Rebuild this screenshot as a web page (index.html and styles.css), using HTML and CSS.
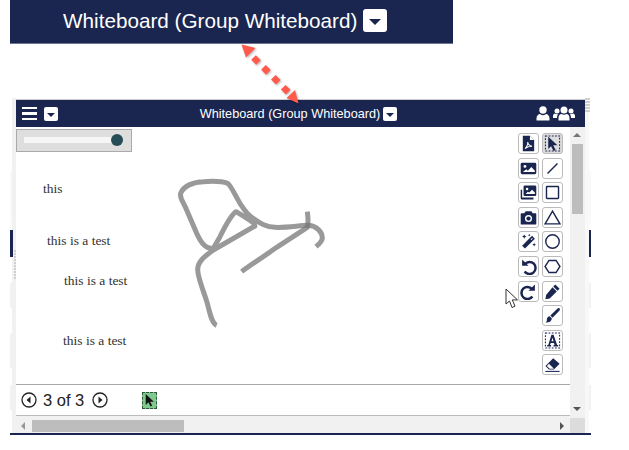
FILE: index.html
```html
<!DOCTYPE html>
<html lang="en">
<head>
  <meta charset="UTF-8">
  <title>Whiteboard</title>
  <link rel="stylesheet" href="styles.css">
</head>
<body>
  <header class="banner">
    <span class="banner-title">Whiteboard (Group Whiteboard)</span>
    <span class="drop drop-big"><i class="caret"></i></span>
  </header>

  <!-- red callout arrow between banner and window -->
  <svg class="callout" width="80" height="70" viewBox="235 40 80 70">
    <path d="M241.500 44.500L255.500 48L246 57.500Z" fill="#ff5a4c"/>
    <path d="M298.500 103.500L286.500 98L295 90Z" fill="#ff5a4c"/>
    <line x1="253.500" y1="57.500" x2="291" y2="95" stroke="#ff5a4c" stroke-width="6.500" stroke-dasharray="7 7"/>
  </svg>

  <div class="stage">
    <i class="strip strip-left"></i>
    <i class="strip strip-right"></i>
    <i class="edge edge-left"></i>
    <i class="edge edge-right"></i>
    <i class="dots dots-left"></i>
    <i class="dots dots-right"></i>
    <div class="frame">
      <div class="topbar">
        <div class="topbar-left">
          <div class="burger"><i></i><i></i><i></i></div>
          <span class="drop"><i class="caret caret-small"></i></span>
        </div>
        <span class="topbar-title">Whiteboard (Group Whiteboard)</span>
        <span class="drop"><i class="caret caret-small"></i></span>
        <div class="topbar-right">
          <svg width="14" height="15" viewBox="0 0 14 15" fill="#fff"><circle cx="7" cy="4" r="3.700"/><path d="M0.500 14.500v-2c0-3 2-4.500 3.500-4.500 1 .8 2 1.200 3 1.200s2-.4 3-1.200c1.500 0 3.500 1.500 3.500 4.500v2z"/></svg>
          <svg width="22" height="15" viewBox="0 0 22 15" fill="#fff"><circle cx="11" cy="4" r="3.500"/><circle cx="4" cy="5" r="2.500"/><circle cx="18" cy="5" r="2.500"/><path d="M5.500 14.500v-2.500c0-2.500 1.500-4 3-4 .8.500 1.600.800 2.500.800s1.700-.3 2.500-.8c1.500 0 3 1.500 3 4v2.500z"/><path d="M0 12v-2c0-1.500 1-2.500 2-2.500.6.400 1.300.6 2 .6l1 .3c-.8.900-1 2.200-1 3.600zM22 12v-2c0-1.500-1-2.500-2-2.500-.6.400-1.300.6-2 .6l-1 .3c.8.900 1 2.200 1 3.600z"/></svg>
        </div>
      </div>

      <div class="work">
        <div class="canvas">
          <div class="slider"><div class="slider-track"></div><div class="slider-thumb"></div></div>

          <p class="note note-a">this</p>
          <p class="note note-b">this is a test</p>
          <p class="note note-c">this is a test</p>
          <p class="note note-d">this is a test</p>

          <svg class="ink" width="180" height="165" viewBox="0 0 540 495" fill="none">
            <path d="M170 466C155 460 150 430 142 400C132 365 113 325 113 298C113 275 135 258 160 240L285 168C285 160 270 150 228 125C212 135 195 170 180 200L160 235C135 238 122 215 110 190L80 120C70 95 58 85 62 70C70 48 100 36 130 35C160 33 190 35 203 40C212 45 225 75 240 100C250 115 258 130 275 142C295 155 315 172 345 172C380 174 420 166 445 166C470 168 487 185 487 205C486 215 478 222 468 230"/>
            <path d="M245 305C270 285 300 268 350 232L442 172C446 155 444 140 442 125"/>
          </svg>

          <div class="tools">
            <div class="tool-col">
              <div class="tool"><svg viewBox="0 0 24 24"><path d="M4 1h10l6 6v16H4z"/><path d="M14 1v6h6" fill="#fff"/><path d="M7 19c3-2 4-6 4-9 0 3 2 5 6 6-3 0-7 1-10 3z" fill="none" stroke="#fff" stroke-width="1.500"/></svg></div>
              <div class="tool"><svg viewBox="0 0 24 24"><rect x="1" y="4" width="22" height="16" rx="2"/><circle cx="7" cy="9" r="2" fill="#fff"/><path d="M4 17l5-4 2 2 5-5 5 5v2z" fill="#fff"/></svg></div>
              <div class="tool"><svg viewBox="0 0 24 24"><path d="M1 8h2v11h16v3H3a2 2 0 0 1-2-2z"/><rect x="5" y="2" width="18" height="15" rx="2"/><circle cx="10" cy="7" r="1.800" fill="#fff"/><path d="M8 14l3-3 2 1 4-4 4 4v2z" fill="#fff"/></svg></div>
              <div class="tool"><svg viewBox="0 0 24 24"><path d="M8 3h8l2 3h4a1 1 0 0 1 1 1v14a1 1 0 0 1-1 1H2a1 1 0 0 1-1-1V7a1 1 0 0 1 1-1h4z"/><circle cx="12" cy="13.500" r="5" fill="#fff"/><circle cx="12" cy="13.500" r="3"/></svg></div>
              <div class="tool"><svg viewBox="0 0 24 24"><path d="M3 18L17 4l4 4L7 22z"/><path d="M15 9l2-2 1 1-2 2z" fill="#fff"/><path d="M6 2l1 2 2 1-2 1-1 2-1-2-2-1 2-1zM20 14l.8 1.700 1.700.8-1.700.8-.8 1.700-.8-1.700-1.700-.8 1.700-.8zM13 1l.6 1.400 1.400.6-1.400.6-.6 1.400-.6-1.400-1.400-.6 1.400-.6z"/></svg></div>
              <div class="tool"><svg viewBox="0 0 24 24"><path d="M7 8.500A8.500 8.500 0 1 1 6.500 19" class="line"/><path d="M3 2v9h9z"/></svg></div>
              <div class="tool"><svg viewBox="0 0 24 24"><path d="M17 8.500A8.500 8.500 0 1 0 17.500 19" class="line"/><path d="M21 2v9h-9z"/></svg></div>
            </div>
            <div class="tool-col">
              <div class="tool tool-on"><svg viewBox="0 0 24 24"><rect x="2" y="1.500" width="20" height="21" fill="none" stroke="#1a2550" stroke-width="1.500" stroke-dasharray="2.500 2"/><path d="M6 2.500l13 12h-6l3.500 6.500-3 1.500-3.500-6.700-4 4z"/></svg></div>
              <div class="tool"><svg viewBox="0 0 24 24"><path d="M5 19L19 5" class="line thin"/></svg></div>
              <div class="tool"><svg viewBox="0 0 24 24"><rect x="3.500" y="3.500" width="17" height="17" rx="1" class="line thin"/></svg></div>
              <div class="tool"><svg viewBox="0 0 24 24"><path d="M12 3L22.500 21h-21z" class="line thin"/></svg></div>
              <div class="tool"><svg viewBox="0 0 24 24"><circle cx="12" cy="12" r="9.500" class="line thin"/></svg></div>
              <div class="tool"><svg viewBox="0 0 24 24"><path d="M7 3.500h10L22.500 12 17 20.500H7L1.500 12z" class="line thin"/></svg></div>
              <div class="tool"><svg viewBox="0 0 24 24"><path d="M16 2l6 6-3 3-6-6zM12 6l6 6-10 10-6 1 1-6z"/></svg></div>
              <div class="tool"><svg viewBox="0 0 24 24"><path d="M22 2c1 1 .5 2-1 4l-9 9-3-3 9-9c2-1.500 3-2 4-1z"/><path d="M8 13l3 3c0 4-3 6-9 6 2-1 2-3 2-4 0-3 2-5 4-5z"/></svg></div>
              <div class="tool"><svg viewBox="0 0 24 24"><rect x="2" y="1.500" width="20" height="21" fill="none" stroke="#1a2550" stroke-width="1.500" stroke-dasharray="2.500 2"/><path d="M10.500 4h3l5 14.500h1.500v2h-6.500v-2h1.500l-1-3h-4.500l-1 3h1.500v2H4.500v-2H6zM12 8l-1.500 5h3z" fill-rule="evenodd"/></svg></div>
              <div class="tool"><svg viewBox="0 0 24 24"><path d="M13 3l9 8-8 8H7l-5-5z"/><path d="M7 11l7 7H8l-4-4z" fill="#fff"/><path d="M2 21h20v1.500H2z"/></svg></div>
            </div>
          </div>
        </div>

        <div class="pager">
          <svg width="16" height="16" viewBox="0 0 16 16"><circle cx="8" cy="8" r="7" fill="none" stroke="#222" stroke-width="1.300"/><path d="M9.500 4.500v7L5.500 8z" fill="#222"/></svg>
          <span class="pager-text">3 of 3</span>
          <svg width="16" height="16" viewBox="0 0 16 16"><circle cx="8" cy="8" r="7" fill="none" stroke="#222" stroke-width="1.300"/><path d="M6.500 4.500v7L10.500 8z" fill="#222"/></svg>
          <div class="current-tool"><svg width="13" height="14" viewBox="0 0 24 24" fill="#111"><path d="M5 1l15 14h-7l4 7-3 2-4-8-5 5z"/></svg></div>
        </div>
      </div>

      <div class="vscroll">
        <i class="tri tri-up"></i>
        <div class="vthumb"></div>
        <i class="tri tri-down"></i>
      </div>

      <div class="hscroll">
        <i class="tri tri-left"></i>
        <div class="hthumb"></div>
        <i class="tri tri-right"></i>
      </div>
      <div class="corner"></div>
    </div>
  </div>

  <svg class="mouse" width="14" height="21" viewBox="0 0 14 21"><path d="M1 1v15l3.500-3 2.500 6.500 3-1.300-2.700-6.300H12.500z" fill="#fff" stroke="#333" stroke-width="1"/></svg>
</body>
</html>
```

FILE: styles.css
```css
body {
  margin: 0;
  background: #fff;
  font-family: "Liberation Sans", Arial, sans-serif;
  position: relative;
  height: 450px;
  overflow: hidden;
}

.banner {
  display: flex;
  align-items: center;
  gap: 6px;
  box-sizing: border-box;
  width: 443px;
  height: 44px;
  margin-left: 10px;
  padding: 0 0 2px 53px;
  background: #1a2550;
  border-bottom: 1px solid #6d7596;
}

.banner-title {
  color: #fff;
  font-size: 20.700px;
  white-space: nowrap;
}

.drop {
  display: flex;
  align-items: center;
  justify-content: center;
  width: 14px;
  height: 14px;
  background: #fff;
  border-radius: 2px;
}

.drop-big {
  width: 24px;
  height: 23px;
  border-radius: 3px;
}

.caret {
  width: 0;
  height: 0;
  margin-top: 3px;
  border: 6px solid transparent;
  border-top: 6px solid #1a2550;
  border-bottom: 0;
}

.caret-small {
  margin-top: 2px;
  border-width: 4px 4px 0;
}

.callout {
  position: absolute;
  left: 235px;
  top: 40px;
  z-index: 5;
  filter: drop-shadow(1px 1px 1px rgba(0, 0, 0, 0.3));
}

.stage {
  position: relative;
  box-sizing: border-box;
  width: 581px;
  height: 337px;
  margin: 54px 0 0 10px;
  padding: 1px 0 0 6px;
  background: #fff;
  border-bottom: 2px solid #1a2550;
}

/* faint patches of the page behind the window */
.stage::before,
.stage::after {
  content: "";
  position: absolute;
  top: 0;
  bottom: 0;
  width: 2px;
  background: linear-gradient(to bottom,
    #fff 72px, #f9f9f9 72px, #f9f9f9 125px, #fff 125px,
    #fff 185px, #f2f2f2 185px, #f2f2f2 210px, #fff 210px,
    #fff 235px, #f2f2f2 235px, #f2f2f2 270px, #fff 270px,
    #fff 287px, #f2f2f2 287px, #f2f2f2 312px, #fff 312px);
}

.stage::before {
  left: 0;
}

.stage::after {
  right: 0;
}

.strip {
  position: absolute;
  top: 0;
  bottom: 0;
}

.strip-left {
  left: 2px;
  width: 4px;
  background: #f1f1f1;
}

.strip-right {
  left: 575px;
  width: 4px;
  background: #f8f8f8;
}

.edge {
  position: absolute;
  top: 132px;
  z-index: 1;
  width: 3px;
  height: 27px;
  background: #1a2550;
}

.edge-left {
  left: 0;
}

.edge-right {
  right: 0;
  width: 2px;
}

.dots {
  position: absolute;
  z-index: 1;
  background: repeating-linear-gradient(to bottom, #cfcfcf 0, #cfcfcf 2px, transparent 2px, transparent 3px);
}

.dots-left {
  left: 4px;
  top: 152px;
  width: 2px;
  height: 30px;
}

.dots-right {
  left: 575px;
  top: 0;
  width: 5px;
  height: 14px;
}

.frame {
  position: relative;
  z-index: 2;
  display: grid;
  grid-template-columns: 554px 15px;
  grid-template-rows: 27px 289px 17px;
  width: 569px;
  background: #fff;
  border-top: 1px solid #ccc;
}

.topbar {
  grid-column: 1 / 3;
  display: flex;
  align-items: center;
  gap: 3px;
  background: #1a2550;
  padding: 0 10px 0 6px;
}

.topbar-left,
.topbar-right {
  flex: 1 1 0;
  display: flex;
  align-items: center;
}

.topbar-left {
  gap: 7px;
}

.topbar-right {
  justify-content: flex-end;
  gap: 3px;
}

.topbar-title {
  color: #fff;
  font-size: 12.700px;
  white-space: nowrap;
}

.burger {
  display: flex;
  flex-direction: column;
  gap: 3px;
  width: 15px;
}

.burger i {
  height: 2.500px;
  background: #fff;
}

.work {
  display: flex;
  flex-direction: column;
}

.canvas {
  position: relative;
  height: 257px;
  border-bottom: 1px solid #aaa;
}

.slider {
  position: absolute;
  left: 0;
  top: 2px;
  box-sizing: border-box;
  width: 116px;
  height: 23px;
  background: #dedede;
  border: 1px solid #aaa;
}

.slider-track {
  position: absolute;
  left: 7px;
  top: 7px;
  width: 90px;
  height: 6px;
  background: #f6f6f6;
}

.slider-thumb {
  position: absolute;
  left: 94px;
  top: 4px;
  width: 12px;
  height: 12px;
  border-radius: 50%;
  background: #264d57;
}

.note {
  position: absolute;
  margin: 0;
  color: #333;
  font-family: "Liberation Serif", "Times New Roman", serif;
  font-size: 13.500px;
  white-space: nowrap;
}

.note-a { left: 27px; top: 54px; }
.note-b { left: 31px; top: 106px; }
.note-c { left: 48px; top: 146px; }
.note-d { left: 47px; top: 206px; }

.ink {
  position: absolute;
  left: 144px;
  top: 43px;
}

.ink path {
  stroke: #777;
  stroke-opacity: 0.75;
  stroke-width: 15;
  stroke-linecap: butt;
  stroke-linejoin: round;
}

.tools {
  position: absolute;
  right: 7px;
  top: 6px;
  display: flex;
  gap: 3px;
}

.tool-col {
  display: flex;
  flex-direction: column;
  gap: 3.600px;
}

.tool {
  display: flex;
  align-items: center;
  justify-content: center;
  box-sizing: border-box;
  width: 21px;
  height: 21px;
  background: #fff;
  border: 1.500px solid #bbb;
  border-radius: 3px;
}

.tool-on {
  background: #ddd;
}

.tool svg {
  flex: none;
  width: 17px;
  height: 17px;
  fill: #1a2550;
}

.tool .line {
  fill: none;
  stroke: #1a2550;
  stroke-width: 3.500;
}

.tool .line.thin {
  stroke-width: 2;
}

.pager {
  display: flex;
  align-items: center;
  gap: 3px;
  height: 30px;
  padding-left: 5px;
  border-bottom: 1px solid #bbb;
}

.pager-text {
  width: 49px;
  padding-left: 3px;
  box-sizing: border-box;
  color: #222;
  font-size: 16.500px;
}

.current-tool {
  display: flex;
  align-items: center;
  justify-content: center;
  box-sizing: border-box;
  width: 15px;
  height: 17px;
  margin-left: 31px;
  background: #7fc98f;
  border: 1px dashed #2a5a38;
}

.vscroll {
  position: relative;
  grid-row: 2 / 4;
  grid-column: 2;
  background: #f1f1f1;
}

.vthumb {
  position: absolute;
  left: 2px;
  top: 17px;
  width: 11px;
  height: 70px;
  background: #bdbdbd;
}

.hscroll {
  position: relative;
  grid-row: 3;
  grid-column: 1;
  background: #f1f1f1;
}

.hthumb {
  position: absolute;
  left: 16px;
  top: 4px;
  width: 152px;
  height: 12px;
  background: #bdbdbd;
}

.corner {
  z-index: 1;
  grid-row: 3;
  grid-column: 2;
  margin-top: 2px;
  background: #dcdcdc;
}

.tri {
  position: absolute;
  width: 0;
  height: 0;
  border: 4px solid transparent;
}

.tri-up {
  left: 3px;
  top: 6px;
  border-top: 0;
  border-bottom: 4px solid #777;
}

.tri-down {
  left: 3px;
  top: 280px;
  border-bottom: 0;
  border-top: 4px solid #555;
}

.tri-left {
  left: 5px;
  top: 6px;
  border-left: 0;
  border-right: 4px solid #999;
}

.tri-right {
  right: 6px;
  top: 6px;
  border-right: 0;
  border-left: 4px solid #555;
}

.mouse {
  position: absolute;
  left: 505px;
  top: 288px;
  z-index: 5;
}
```
